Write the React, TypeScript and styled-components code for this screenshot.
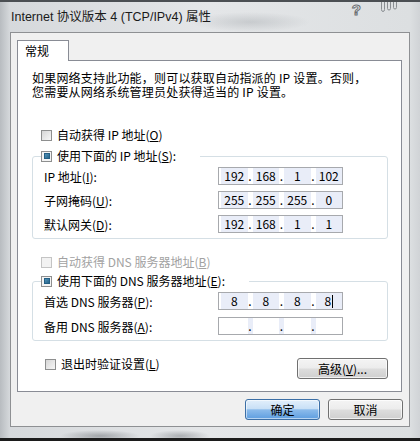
import React from 'react'
import styled, { createGlobalStyle } from 'styled-components'

const GlobalStyle = createGlobalStyle`
  html, body {
    margin: 0;
    padding: 0;
    width: 420px;
    height: 441px;
    overflow: hidden;
    background: #d9dcdf;
  }
  * { box-sizing: border-box; }
`

const CJK = `"Noto Sans CJK SC", "Noto Sans", sans-serif`

const Frame = styled.div`
  width: 420px;
  height: 441px;
  display: flex;
  flex-direction: column;
  padding: 0 10px;
  border-top: 2px solid #4b4f53;
  border-bottom: 3px solid #1c1c1c;
  background:
    radial-gradient(ellipse 40px 6px at 100px 434px, rgba(90, 95, 100, 0.45), transparent),
    radial-gradient(ellipse 30px 6px at 180px 434px, rgba(90, 95, 100, 0.4), transparent),
    radial-gradient(ellipse 60px 10px at 250px 20px, rgba(150, 155, 160, 0.35), transparent),
    linear-gradient(90deg, #b8bcc0 0px, #d6d9dc 10px, #e4e6e8 50%, #dcdfe1 410px, #d0d3d6 420px);
  font-family: ${CJK};
  font-size: 12px;
  color: #000;
`

const TitleBar = styled.div`
  height: 30px;
  display: flex;
  justify-content: space-between;
  align-items: flex-start;
`

const Title = styled.div`
  margin-top: 7px;
  padding-left: 1px;
  line-height: 16px;
  font-family: "Liberation Sans", "Noto Sans CJK SC", sans-serif;
  font-size: 12.5px;
  color: #1a1a1a;
`

const TitleIcons = styled.div`
  display: flex;
  align-items: flex-start;
  gap: 19px;
  margin-right: 12px;
`

const Help = styled.span`
  font-family: "Liberation Sans", sans-serif;
  font-weight: bold;
  font-size: 15px;
  line-height: 15px;
  color: #fff;
  -webkit-text-stroke: 1px #6a6e72;
`

const Body = styled.div`
  height: 395px;
  border: 1px solid #8e9093;
  background: #f0f0f0;
  padding: 7px 7px 0 6px;
  display: flex;
  flex-direction: column;
`

const Tab = styled.div`
  width: 52px;
  height: 21px;
  margin-bottom: -1px;
  padding: 2px 0 0 7px;
  border: 1px solid #898c95;
  border-bottom: none;
  background: #fff;
  line-height: 16px;
  position: relative;
  z-index: 1;
`

const Panel = styled.div`
  border: 1px solid #898c95;
  background: #fff;
  padding: 10px 13px 12px 14px;
  display: flex;
  flex-direction: column;
`

const Description = styled.p`
  margin: 0;
  line-height: 14px;
  white-space: nowrap;
  letter-spacing: 0.2px;
`

const CheckRow = styled.label<{ $disabled?: boolean; $top?: number; $indent?: number }>`
  display: flex;
  align-items: center;
  gap: 5px;
  height: 16px;
  line-height: 16px;
  margin-top: ${p => p.$top ?? 0}px;
  padding-left: ${p => p.$indent ?? 9}px;
  color: ${p => (p.$disabled ? '#a2a2a2' : '#000')};
  white-space: nowrap;
`

const Box = styled.span<{ $checked?: boolean; $disabled?: boolean }>`
  width: 11px;
  height: 11px;
  flex: none;
  display: flex;
  align-items: center;
  justify-content: center;
  border: 1px solid ${p => (p.$disabled ? '#c4c4c4' : '#8e8f8f')};
  background: ${p =>
    p.$disabled
      ? '#f2f2f2'
      : p.$checked
      ? '#f4f4f4'
      : 'linear-gradient(135deg, #d6d6d6, #f7f7f7)'};

  &::after {
    content: '';
    display: ${p => (p.$checked ? 'block' : 'none')};
    width: 6px;
    height: 6px;
    background: linear-gradient(135deg, #5a9cc4, #1d5a7e);
    box-shadow: inset 0 0 0 1px #245f84;
  }
`

const Group = styled.fieldset<{ $top: number; $gap: number }>`
  margin: ${p => p.$top}px 0 0 0;
  min-width: 0;
  padding: 3px 44px 5px 11px;
  border: 1px solid #d5dfe5;
  border-radius: 3px;
  display: flex;
  flex-direction: column;
  gap: ${p => p.$gap}px;
`

const Legend = styled.legend`
  margin-left: -3px;
  padding: 0 24px 0 0;
`

const LegendInner = styled.span`
  display: flex;
  align-items: center;
  gap: 5px;
  height: 16px;
  line-height: 16px;
  white-space: nowrap;
`

const FieldRow = styled.div`
  display: flex;
  align-items: center;
  justify-content: space-between;
  height: 18px;
`

const FieldLabel = styled.span`
  white-space: nowrap;
`

const IpBox = styled.div`
  width: 125px;
  height: 18px;
  border: 1px solid #a7a9ad;
  background: #fff;
  display: flex;
  align-items: stretch;
  padding-left: 2px;
`

const Octet = styled.span<{ $filled: boolean }>`
  flex: 1;
  display: flex;
  align-items: center;
  justify-content: center;
  background: ${p => (p.$filled ? '#e9edf8' : '#fff')};
  line-height: 16px;
`

const Dot = styled.span<{ $filled: boolean }>`
  width: 5px;
  display: flex;
  align-items: center;
  justify-content: center;
  background: ${p => (p.$filled ? '#fff' : '#e9edf8')};
  line-height: 16px;
`

const Caret = styled.span`
  width: 1px;
  height: 13px;
  background: #000;
  margin-left: 1px;
`

const BottomRow = styled.div`
  margin-top: 17px;
  display: flex;
  justify-content: space-between;
  align-items: flex-start;
`

const Button = styled.button<{ $default?: boolean; $w: number }>`
  width: ${p => p.$w}px;
  height: 21px;
  padding: 0;
  border: 1px solid ${p => (p.$default ? '#3c6fa6' : '#707070')};
  border-radius: 3px;
  font-family: ${CJK};
  font-size: 12px;
  line-height: 17px;
  color: #000;
  background: ${p =>
    p.$default
      ? 'linear-gradient(#e2effb 0%, #c9e0f6 45%, #8bbbeb 52%, #5e9ee0 100%)'
      : 'linear-gradient(#f4f4f4 0%, #ececec 48%, #dddddd 52%, #cfcfcf 100%)'};
  box-shadow: inset 0 0 0 1px ${p => (p.$default ? 'rgba(255,255,255,0.55)' : 'rgba(255,255,255,0.7)')};
`

const ButtonBar = styled.div`
  margin-top: 7px;
  margin-right: -1px;
  display: flex;
  justify-content: flex-end;
  gap: 8px;
`

function Key({ k }: { k: string }) {
  return (
    <>
      (<u>{k}</u>)
    </>
  )
}

function IpField({ value, caret }: { value?: string[]; caret?: boolean }) {
  const parts = value ?? ['', '', '', '']
  const filled = !!value
  return (
    <IpBox>
      {parts.map((p, i) => (
        <React.Fragment key={i}>
          {i > 0 && <Dot $filled={filled}>.</Dot>}
          <Octet $filled={filled}>
            {p}
            {caret && i === 3 && <Caret />}
          </Octet>
        </React.Fragment>
      ))}
    </IpBox>
  )
}

export default function App() {
  return (
    <>
      <GlobalStyle />
      <Frame>
        <TitleBar>
          <Title>Internet 协议版本 4 (TCP/IPv4) 属性</Title>
          <TitleIcons>
            <Help>?</Help>
            <svg width="18" height="10" viewBox="0 0 18 10">
              <g fill="none" stroke="#8a8e92" strokeWidth="1">
                <path d="M1.5 0 V7.5 Q1.5 9.5 3 9.5 Q4.5 9.5 4.5 7.5 V0" />
                <path d="M7.5 0 V6.5 Q7.5 8 9 8 Q10.5 8 10.5 6.5 V0" />
                <path d="M13.5 0 V5.5 Q13.5 7 15 7 Q16.5 7 16.5 5.5 V0" />
              </g>
            </svg>
          </TitleIcons>
        </TitleBar>
        <Body>
          <Tab>常规</Tab>
          <Panel>
            <Description>
              如果网络支持此功能，则可以获取自动指派的 IP 设置。否则，
              <br />
              您需要从网络系统管理员处获得适当的 IP 设置。
            </Description>

            <CheckRow $top={28}>
              <Box />
              <span>自动获得 IP 地址<Key k="O" /></span>
            </CheckRow>

            <Group $top={5} $gap={6}>
              <Legend>
                <LegendInner>
                  <Box $checked />
                  <span>使用下面的 IP 地址<Key k="S" />:</span>
                </LegendInner>
              </Legend>
              <FieldRow>
                <FieldLabel>IP 地址<Key k="I" />:</FieldLabel>
                <IpField value={['192', '168', '1', '102']} />
              </FieldRow>
              <FieldRow>
                <FieldLabel>子网掩码<Key k="U" />:</FieldLabel>
                <IpField value={['255', '255', '255', '0']} />
              </FieldRow>
              <FieldRow>
                <FieldLabel>默认网关<Key k="D" />:</FieldLabel>
                <IpField value={['192', '168', '1', '1']} />
              </FieldRow>
            </Group>

            <CheckRow $top={15} $disabled>
              <Box $disabled />
              <span>自动获得 DNS 服务器地址<Key k="B" /></span>
            </CheckRow>

            <Group $top={3} $gap={7}>
              <Legend>
                <LegendInner>
                  <Box $checked />
                  <span>使用下面的 DNS 服务器地址<Key k="E" />:</span>
                </LegendInner>
              </Legend>
              <FieldRow>
                <FieldLabel>首选 DNS 服务器<Key k="P" />:</FieldLabel>
                <IpField value={['8', '8', '8', '8']} caret />
              </FieldRow>
              <FieldRow>
                <FieldLabel>备用 DNS 服务器<Key k="A" />:</FieldLabel>
                <IpField />
              </FieldRow>
            </Group>

            <BottomRow>
              <CheckRow $indent={13} $top={-2}>
                <Box />
                <span>退出时验证设置<Key k="L" /></span>
              </CheckRow>
              <Button $w={91}>高级<Key k="V" />...</Button>
            </BottomRow>
          </Panel>
          <ButtonBar>
            <Button $default $w={75}>确定</Button>
            <Button $w={75}>取消</Button>
          </ButtonBar>
        </Body>
      </Frame>
    </>
  )
}
